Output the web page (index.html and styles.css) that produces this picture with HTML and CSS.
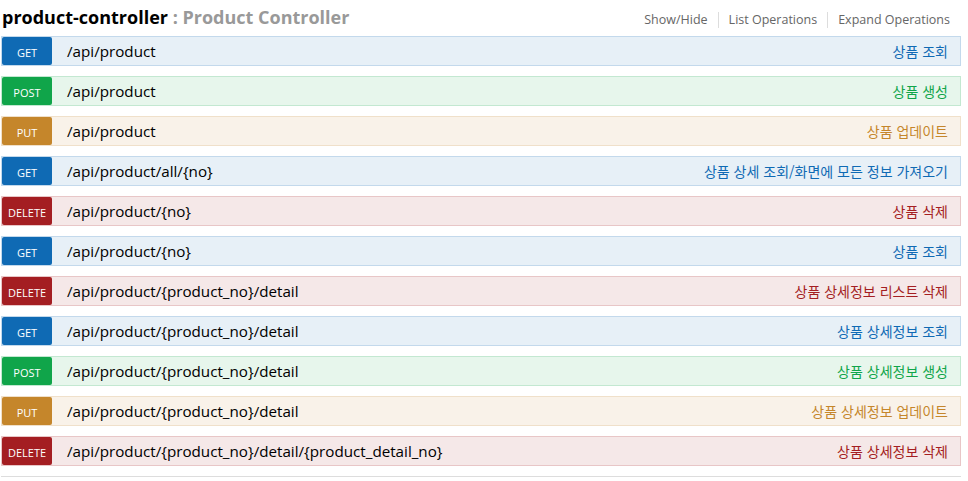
FILE: index.html
```html
<!DOCTYPE html>
<html lang="ko">
<head>
<meta charset="utf-8">
<link rel="stylesheet" href="styles.css">
</head>
<body>
<div class="resource">
  <div class="heading">
    <h2 class="title"><span class="name">product-controller</span><span class="desc"> : Product Controller</span></h2>
    <ul class="options">
      <li>Show/Hide</li>
      <li>List Operations</li>
      <li>Expand Operations</li>
    </ul>
  </div>
  <ul class="ops">
    <li class="op get"><span class="method">GET</span><span class="path">/api/product</span><span class="summary">상품 조회</span></li>
    <li class="op post"><span class="method">POST</span><span class="path">/api/product</span><span class="summary">상품 생성</span></li>
    <li class="op put"><span class="method">PUT</span><span class="path">/api/product</span><span class="summary">상품 업데이트</span></li>
    <li class="op get"><span class="method">GET</span><span class="path">/api/product/all/{no}</span><span class="summary">상품 상세 조회/화면에 모든 정보 가져오기</span></li>
    <li class="op delete"><span class="method">DELETE</span><span class="path">/api/product/{no}</span><span class="summary">상품 삭제</span></li>
    <li class="op get"><span class="method">GET</span><span class="path">/api/product/{no}</span><span class="summary">상품 조회</span></li>
    <li class="op delete"><span class="method">DELETE</span><span class="path">/api/product/{product_no}/detail</span><span class="summary">상품 상세정보 리스트 삭제</span></li>
    <li class="op get"><span class="method">GET</span><span class="path">/api/product/{product_no}/detail</span><span class="summary">상품 상세정보 조회</span></li>
    <li class="op post"><span class="method">POST</span><span class="path">/api/product/{product_no}/detail</span><span class="summary">상품 상세정보 생성</span></li>
    <li class="op put"><span class="method">PUT</span><span class="path">/api/product/{product_no}/detail</span><span class="summary">상품 상세정보 업데이트</span></li>
    <li class="op delete"><span class="method">DELETE</span><span class="path">/api/product/{product_no}/detail/{product_detail_no}</span><span class="summary">상품 상세정보 삭제</span></li>
  </ul>
  <div class="footer-line"></div>
</div>
</body>
</html>
```
FILE: styles.css
```css
* { box-sizing: border-box; }
html, body { margin: 0; padding: 0; background: #fff; }
body {
  font-family: "Open Sans", "Noto Sans CJK KR", sans-serif;
  padding: 0 7px 0 1px;
}
ul { list-style: none; margin: 0; padding: 0; }
.heading {
  display: flex;
  align-items: center;
  justify-content: space-between;
  height: 36px;
}
.title {
  margin: 0 0 0 1px;
  font-size: 18px;
  font-weight: bold;
  line-height: 1;
  padding-bottom: 2px;
}
.name { color: #000; }
.desc { color: #999; }
.options {
  display: flex;
  align-items: center;
  margin-right: 11px;
  padding-top: 4px;
}
.options li {
  font-size: 12.5px;
  color: #666;
  padding: 0 10px;
  line-height: 16px;
  border-right: 1px solid #ddd;
}
.options li:last-child { border-right: none; padding-right: 0; }
.ops { display: flex; flex-direction: column; gap: 10px; }
.op {
  display: flex;
  align-items: center;
  height: 30px;
  border: 1px solid;
  padding-right: 12px;
}
.method {
  width: 50px;
  height: 28px;
  border-radius: 2px;
  color: #fff;
  font-size: 11px;
  display: flex;
  align-items: center;
  justify-content: center;
  padding-top: 2px;
}
.path {
  margin-left: 15px;
  font-size: 15.2px;
  color: #000;
  flex: 1;
}
.summary {
  font-size: 14px;
  font-family: "Noto Sans CJK KR", sans-serif;
}
.get { background: #e7f0f7; border-color: #c3d9ec; }
.get .method { background: #0f6ab4; }
.get .summary { color: #0f6ab4; }
.post { background: #e7f6ec; border-color: #c3e8d1; }
.post .method { background: #10a54a; }
.post .summary { color: #10a54a; }
.put { background: #f9f2e9; border-color: #f0e0ca; }
.put .method { background: #c5862b; }
.put .summary { color: #c5862b; }
.delete { background: #f5e8e8; border-color: #e8c6c7; }
.delete .method { background: #a41e22; }
.delete .summary { color: #a41e22; }
.footer-line {
  margin-top: 10px;
  border-top: 1px solid #ddd;
}
```
